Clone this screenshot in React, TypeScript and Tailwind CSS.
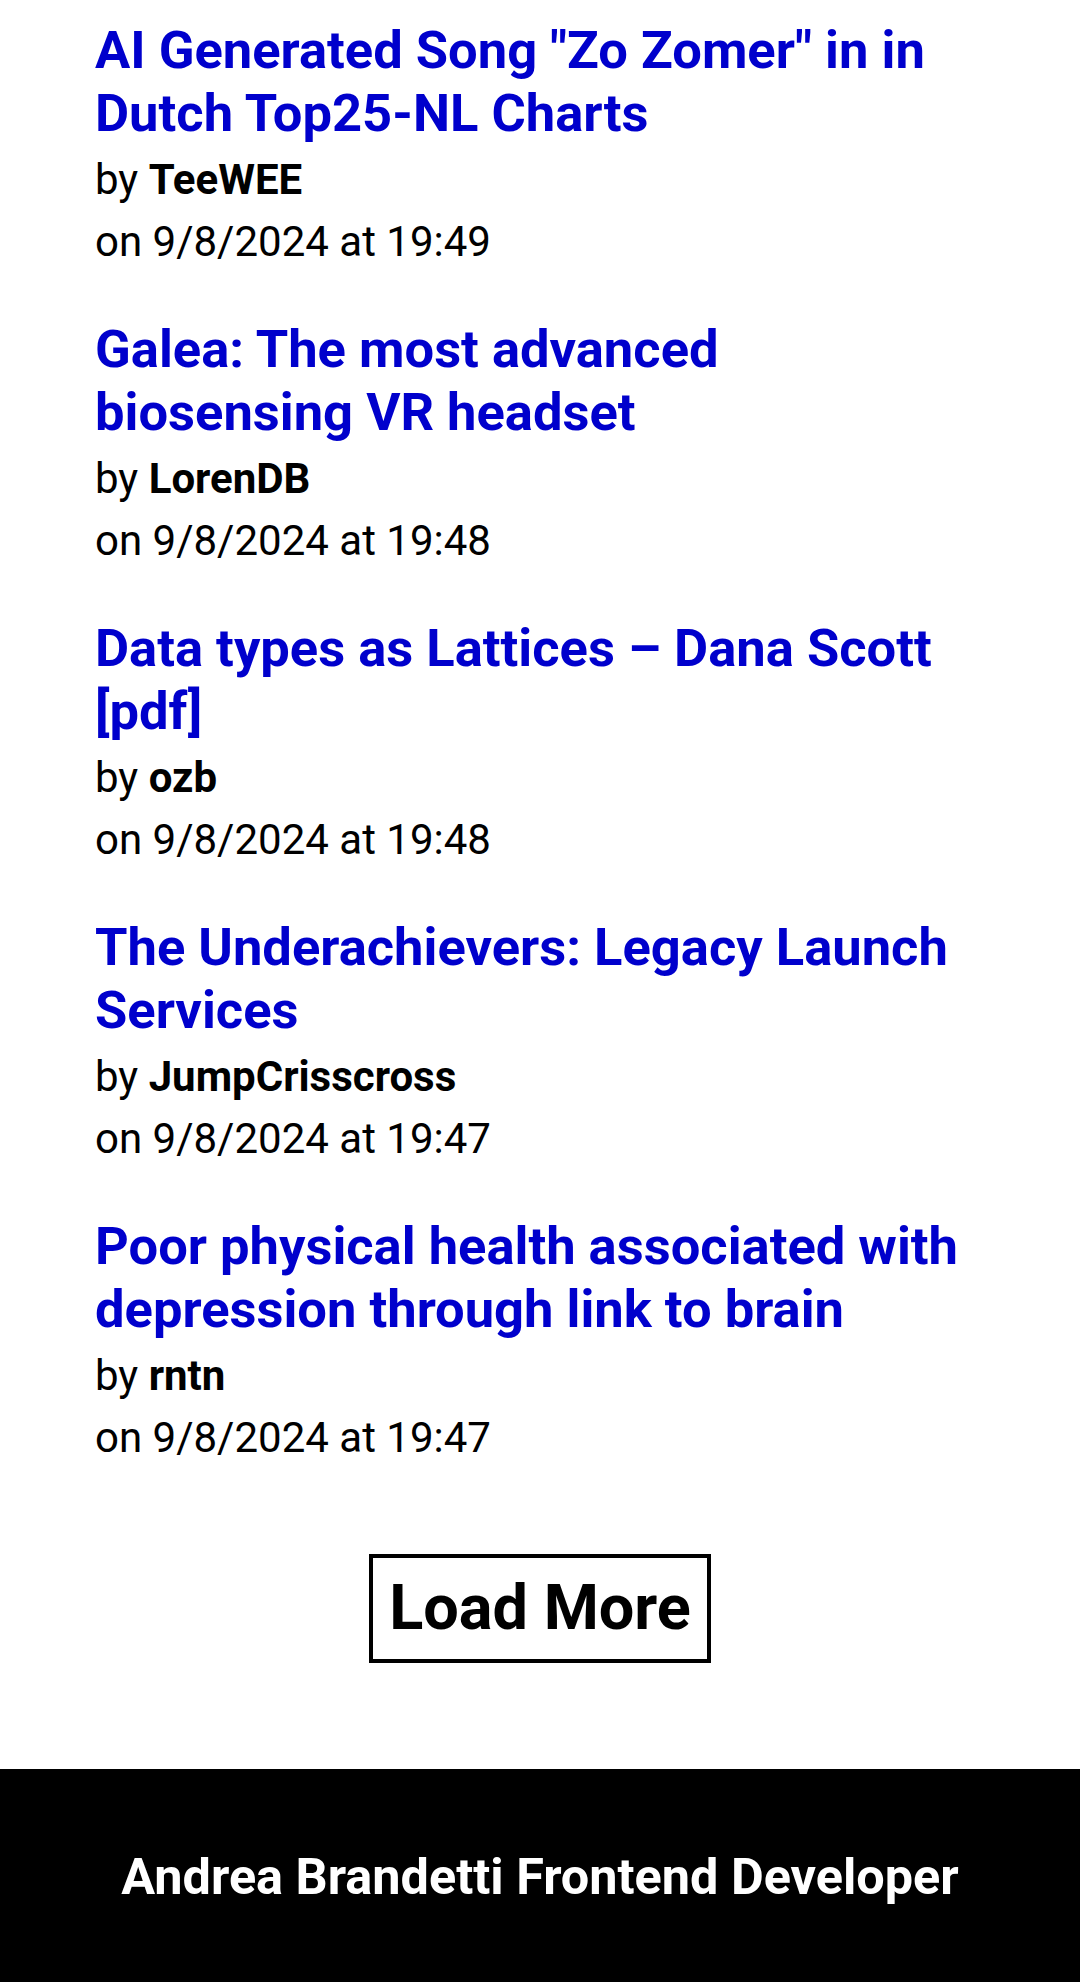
import React from 'react';

interface Story {
  id: number;
  title: string;
  author: string;
  date: string;
  time: string;
}

const stories: Story[] = [
  { id: 1, title: 'AI Generated Song "Zo Zomer" in in Dutch Top25-NL Charts', author: 'TeeWEE', date: '9/8/2024', time: '19:49' },
  { id: 2, title: 'Galea: The most advanced biosensing VR headset', author: 'LorenDB', date: '9/8/2024', time: '19:48' },
  { id: 3, title: 'Data types as Lattices – Dana Scott [pdf]', author: 'ozb', date: '9/8/2024', time: '19:48' },
  { id: 4, title: 'The Underachievers: Legacy Launch Services', author: 'JumpCrisscross', date: '9/8/2024', time: '19:47' },
  { id: 5, title: 'Poor physical health associated with depression through link to brain', author: 'rntn', date: '9/8/2024', time: '19:47' },
];

const StoryItem: React.FC<{ story: Story }> = ({ story }) => {
  return (
    <li>
      <a href="#" className="block text-[52.5px] font-bold leading-[63px] text-[#0000cc]">
        {story.title}
      </a>
      <p className="mt-[4px] text-[42px] leading-[62px] text-black">
        by <span className="font-bold">{story.author}</span>
      </p>
      <p className="text-[42px] leading-[62px] text-black">
        on {story.date} at {story.time}
      </p>
    </li>
  );
};

export default function App() {
  return (
    <div className="min-h-screen bg-white font-['Roboto',sans-serif]">
      <main className="px-[95px] pt-[19px]">
        <ul className="flex flex-col gap-[45px]">
          {stories.map((story) => (
            <StoryItem key={story.id} story={story} />
          ))}
        </ul>
        <div className="flex justify-center pt-[85px] pb-[106px]">
          <button className="border-4 border-black bg-white px-[16px] pt-[13px] pb-[14px] text-[63px] font-bold leading-[74px] text-black">
            Load More
          </button>
        </div>
      </main>
      <footer className="flex h-[215px] items-center justify-center bg-black">
        <h3 className="text-[50.4px] font-bold leading-[60px] text-white">Andrea Brandetti Frontend Developer</h3>
      </footer>
    </div>
  );
}
